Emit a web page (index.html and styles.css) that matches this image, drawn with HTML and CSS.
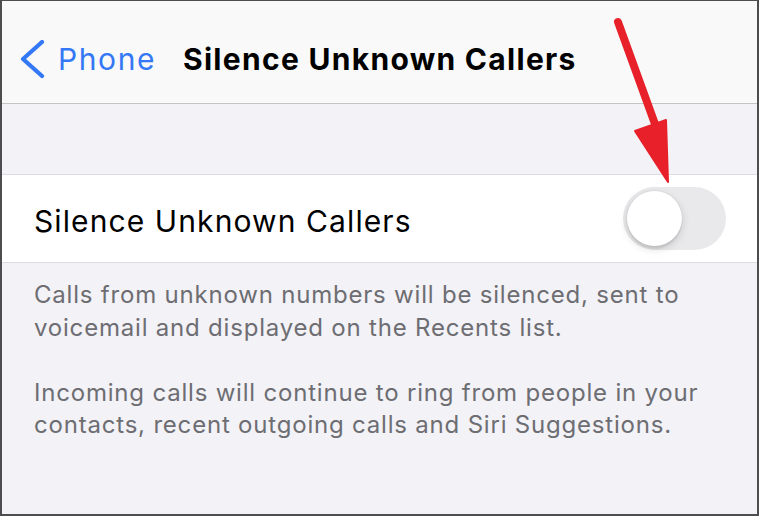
FILE: index.html
```html
<!DOCTYPE html>
<html>
<head>
<meta charset="utf-8">
<link rel="stylesheet" href="styles.css">
</head>
<body>
<div class="screen">
  <header class="nav">
    <div class="back">
      <svg class="chev" width="26" height="40" viewBox="0 0 26 40"><path d="M23 2 L4 19 L23 36" fill="none" stroke="#3478f6" stroke-width="4.2" stroke-linecap="round" stroke-linejoin="round"/></svg>
      <span class="back-label">Phone</span>
    </div>
    <h1 class="title">Silence Unknown Callers</h1>
  </header>
  <div class="spacer"></div>
  <div class="row">
    <span class="row-label">Silence Unknown Callers</span>
    <div class="toggle"><div class="knob"></div></div>
  </div>
  <div class="footer">
    <p>Calls from unknown numbers will be silenced, sent to voicemail and displayed on the Recents list.</p>
    <p>Incoming calls will continue to ring from people in your contacts, recent outgoing calls and Siri Suggestions.</p>
  </div>
  <svg class="arrow" width="759" height="516" viewBox="0 0 759 516">
    <line x1="618" y1="22" x2="655" y2="124" stroke="#e8202a" stroke-width="8" stroke-linecap="round"/>
    <polygon points="635,131 666,120 668,182" fill="#e8202a" stroke="#e8202a" stroke-width="2" stroke-linejoin="round"/>
  </svg>
</div>
</body>
</html>
```
FILE: styles.css
```css
* { box-sizing: border-box; }
html, body { margin: 0; padding: 0; }
body { width: 759px; height: 516px; overflow: hidden; font-family: Inter, "Liberation Sans", Arial, sans-serif; }
.screen {
  position: relative;
  width: 759px;
  height: 516px;
  border-style: solid;
  border-color: #4d4d4f;
  border-width: 1px 2px 2px 2px;
  background: #f2f2f7;
  display: flex;
  flex-direction: column;
}
.nav {
  height: 103px;
  background: #f9f9f9;
  border-bottom: 1px solid #c4c4c6;
  display: flex;
  align-items: flex-start;
  padding: 40px 0 0 17px;
  flex-shrink: 0;
}
.back {
  display: flex;
  align-items: center;
  height: 36px;
  width: 164px;
}
.chev { display: block; flex-shrink: 0; position: relative; top: 1px; }
.back-label {
  margin-left: 13px;
  font-size: 30px;
  line-height: 36px;
  letter-spacing: 1.6px;
  color: #3478f6;
}
.title {
  margin: 0;
  font-size: 30px;
  line-height: 36px;
  font-weight: 700;
  letter-spacing: 1.3px;
  color: #000;
}
.spacer { height: 70px; flex-shrink: 0; }
.row {
  height: 89px;
  flex-shrink: 0;
  background: #fff;
  border-top: 1px solid #dcdce0;
  border-bottom: 1px solid #dcdce0;
  display: flex;
  align-items: center;
  justify-content: space-between;
  padding: 0 31px 0 32px;
}
.row-label { font-size: 30px; color: #000; line-height: 36px; padding-top: 4px; letter-spacing: 1.1px; }
.toggle {
  width: 103px;
  height: 63px;
  border-radius: 32px;
  background: #e9e9eb;
  padding: 4px;
  margin-bottom: 1px;
}
.knob {
  width: 55px;
  height: 55px;
  border-radius: 50%;
  background: #fff;
  box-shadow: 0 3px 8px rgba(0,0,0,0.15), 0 3px 1px rgba(0,0,0,0.06), 0 0 0 1px rgba(0,0,0,0.03);
}
.footer {
  padding: 16px 30px 0 32px;
  color: #6d6d72;
  font-size: 24px;
  line-height: 32.5px;
  letter-spacing: 0.8px;
}
.footer p { margin: 0 0 32.5px 0; }
.arrow { position: absolute; left: -2px; top: -1px; pointer-events: none; }
```
